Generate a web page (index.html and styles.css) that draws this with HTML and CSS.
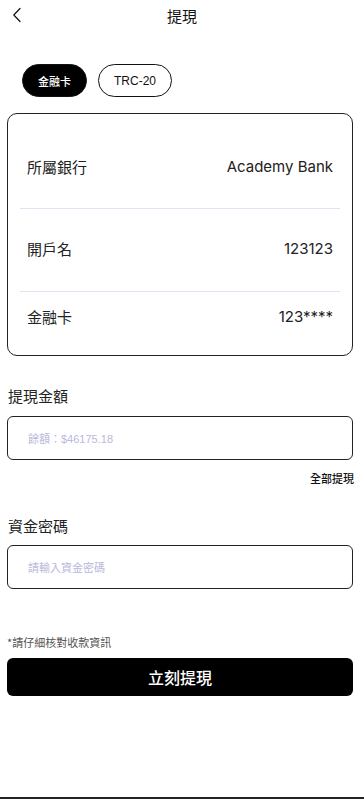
FILE: index.html
```html
<!DOCTYPE html>
<html lang="zh-Hant">
<head>
<meta charset="utf-8">
<meta name="viewport" content="width=device-width, initial-scale=1">
<title>提現</title>
<link rel="stylesheet" href="styles.css">
</head>
<body>
<div class="page">
  <header class="topbar">
    <span class="back">
      <svg width="10" height="16" viewBox="0 0 10 16"><path d="M8 1.5 L1.8 8 L8 14.5" fill="none" stroke="#111" stroke-width="1.2" stroke-linecap="round" stroke-linejoin="round"/></svg>
    </span>
    <h1 class="title">提現</h1>
  </header>

  <div class="tabs">
    <span class="tab active">金融卡</span>
    <span class="tab">TRC-20</span>
  </div>

  <section class="card">
    <div class="row r1"><span>所屬銀行</span><span class="val">Academy Bank</span></div>
    <div class="divider"></div>
    <div class="row r2"><span>開戶名</span><span class="val">123123</span></div>
    <div class="divider"></div>
    <div class="row r3"><span>金融卡</span><span class="val">123****</span></div>
  </section>

  <div class="field">
    <div class="label">提現金額</div>
    <div class="input"><span class="ph">餘額：$46175.18</span></div>
    <div class="all">全部提現</div>
  </div>

  <div class="field f2">
    <div class="label">資金密碼</div>
    <div class="input"><span class="ph">請輸入資金密碼</span></div>
  </div>

  <p class="note">*請仔細核對收款資訊</p>
  <button class="submit">立刻提現</button>

  <div class="bottombar"></div>
</div>
</body>
</html>
```

FILE: styles.css
```css
* { box-sizing: border-box; }
html, body { margin: 0; padding: 0; background: #fff; }
body {
  font-family: "Liberation Sans", "Noto Sans CJK TC", sans-serif;
  color: #111;
}
.page {
  min-height: 100vh;
  display: flex;
  flex-direction: column;
}
.topbar {
  height: 33px;
  display: flex;
  align-items: center;
  justify-content: center;
  position: relative;
}
.back {
  position: absolute;
  left: 12px;
  top: 7px;
  display: flex;
}
.title {
  margin: 0 0 1px;
  font-size: 15px;
  font-weight: 400;
  font-family: "Noto Sans CJK TC", sans-serif;
  line-height: 20px;
  color: #111;
}
.tabs {
  display: flex;
  gap: 11px;
  padding: 31px 0 0 22px;
}
.tab {
  height: 33px;
  border-radius: 17px;
  border: 1px solid #111;
  display: flex;
  align-items: center;
  justify-content: center;
  font-size: 12px;
  width: 74px;
  font-family: "Liberation Sans", "Noto Sans CJK TC", sans-serif;
}
.tab.active {
  width: 65px;
  background: #000;
  color: #fff;
  font-size: 11px;
  font-weight: 500;
  font-family: "Noto Sans CJK TC", sans-serif;
}
.card {
  margin: 16px 0 0 7px;
  width: 346px;
  border: 1px solid #222;
  border-radius: 10px;
  padding: 14px 12px 11px;
}
.row {
  display: flex;
  align-items: center;
  justify-content: space-between;
  padding: 0 7px;
  font-size: 15px;
  color: #222;
  font-family: "Noto Sans CJK TC", sans-serif;
}
.row span { line-height: 20px; margin-top: -2px; }
.row .val {
  font-family: Inter, "Liberation Sans", sans-serif;
  font-size: 15px;
  color: #222;
}
.r1 { height: 80px; }
.r2 { height: 82px; }
.r3 { height: 52px; }
.divider { height: 1px; background: #e2e2f2; }
.field { padding: 0 11px 0 7px; margin-top: 30px; }
.label {
  font-size: 15px;
  line-height: 20px;
  color: #222;
  padding-left: 1px;
  font-family: "Noto Sans CJK TC", sans-serif;
}
.input {
  margin-top: 10px;
  height: 44px;
  border: 1px solid #222;
  border-radius: 6px;
  display: flex;
  align-items: center;
  padding-left: 20px;
}
.f2 .input { margin-top: 9px; }
.ph {
  font-size: 11px;
  color: #b9b9dc;
  font-family: "Liberation Sans", "Noto Sans CJK TC", sans-serif;
}
.all {
  margin-top: 10px;
  text-align: right;
  font-size: 11px;
  line-height: 16px;
  font-weight: 500;
  font-family: "Noto Sans CJK TC", sans-serif;
  margin-right: -1px;
}
.note {
  margin: 45px 0 0 7px;
  font-size: 11px;
  line-height: 16px;
  color: #555;
  font-family: "Noto Sans CJK TC", sans-serif;
}
.submit {
  margin: 8px 0 0 7px;
  width: 346px;
  height: 38px;
  background: #000;
  color: #fff;
  border: none;
  border-radius: 6px;
  font-size: 16px;
  font-weight: 500;
  font-family: "Noto Sans CJK TC", sans-serif;
  padding: 0;
}
.bottombar {
  margin-top: auto;
  height: 2px;
  background: #222;
}
```
